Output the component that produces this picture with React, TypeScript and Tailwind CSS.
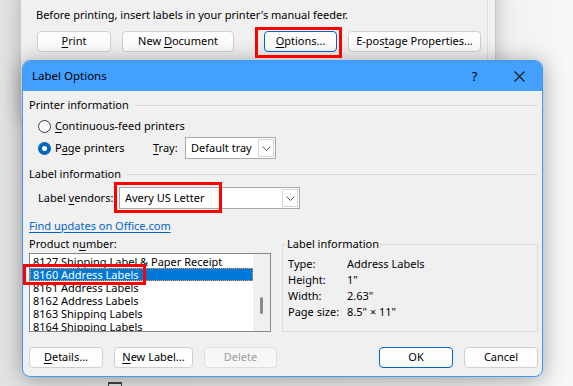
import React from 'react'

const font = "font-['Noto_Sans',sans-serif]"

function Btn({
  children,
  className = '',
  focused = false,
  disabled = false,
}: {
  children: React.ReactNode
  className?: string
  focused?: boolean
  disabled?: boolean
}) {
  const tone = disabled
    ? 'border-[#dedede] bg-[#f7f7f7] text-[#9d9d9d]'
    : focused
      ? 'border-[#0067c0] bg-[#fdfdfd] text-black'
      : 'border-[#d0d0d0] bg-[#fdfdfd] text-black'
  return (
    <div
      className={`flex h-[21px] items-center justify-center rounded-[4px] border text-[11px] ${tone} ${className}`}
    >
      <span>{children}</span>
    </div>
  )
}

function Chevron() {
  return (
    <svg width="9" height="5" viewBox="0 0 9 5">
      <path d="M0.5 0.5 L4.5 4.5 L8.5 0.5" fill="none" stroke="#5f5f5f" strokeWidth="1" />
    </svg>
  )
}

function Select({ value, className = '' }: { value: string; className?: string }) {
  return (
    <div className={`flex h-[22px] items-stretch border border-[#a9a9a9] bg-white ${className}`}>
      <div className="flex flex-1 items-center pl-[5px] text-[11px] text-black">{value}</div>
      <div className="m-px flex w-[16px] items-center justify-center border border-[#d6d6d6] bg-white">
        <Chevron />
      </div>
    </div>
  )
}

function Radio({ checked }: { checked?: boolean }) {
  return checked ? (
    <div className="flex h-[13px] w-[13px] items-center justify-center rounded-full bg-[#0067c0]">
      <div className="h-[5px] w-[5px] rounded-full bg-white" />
    </div>
  ) : (
    <div className="h-[13px] w-[13px] rounded-full border border-[#3a3a3a] bg-[#fafafa]" />
  )
}

function GroupHeader({ title }: { title: string }) {
  return (
    <div className="flex h-4 items-center gap-[6px]">
      <span>{title}</span>
      <div className="h-px flex-1 bg-[#dadada]" />
    </div>
  )
}

const products = [
  '8127 Shipping Label & Paper Receipt',
  '8160 Address Labels',
  '8161 Address Labels',
  '8162 Address Labels',
  '8163 Shipping Labels',
  '8164 Shipping Labels',
]

const details = [
  ['Type:', 'Address Labels'],
  ['Height:', '1"'],
  ['Width:', '2.63"'],
  ['Page size:', '8.5" × 11"'],
]

export default function App() {
  return (
    <div
      className={`relative h-[386px] w-[573px] overflow-hidden bg-[linear-gradient(90deg,#e3e3e3,#ececec_80%,#f8f8f8)] ${font} text-[11px] text-black`}
    >
      {/* Back window: Envelopes and Labels */}
      <div className="absolute left-[20px] top-[-10px] h-[130px] w-[476px] border border-[#c9c9c9] bg-[#f0f0f0] shadow-[0_0_18px_rgba(0,0,0,0.22)]">
        <div className="h-full w-[467px] border-r border-[#dedede] pl-[15px] pt-[16px]">
          <div className="h-4 leading-4">Before printing, insert labels in your printer's manual feeder.</div>
          <div className="mt-[8px] flex">
            <Btn className="ml-px w-[74px]">
              <u className="underline-offset-2">P</u>rint
            </Btn>
            <Btn className="ml-[11px] w-[112px]">
              New <u className="underline-offset-2">D</u>ocument
            </Btn>
            <Btn focused className="ml-[30px] w-[73px]">
              <u className="underline-offset-2">O</u>ptions...
            </Btn>
            <Btn className="ml-[11px] w-[133px]">
              E-pos<u className="underline-offset-2">t</u>age Properties...
            </Btn>
          </div>
        </div>
      </div>

      {/* Front dialog: Label Options */}
      <div className="absolute left-[22px] top-[60px] w-[521px] overflow-hidden rounded-[8px] border border-[#3d9afa] bg-[#f0f0f0] shadow-[0_2px_22px_rgba(0,0,0,0.35)]">
        <div className="flex h-[30px] items-center bg-[#44a0ff]">
          <span className="flex-1 pl-[9px] text-[11.5px]">Label Options</span>
          <span className="w-[45px] text-center text-[13px] leading-none">?</span>
          <div className="flex w-[45px] justify-center">
            <svg width="11" height="11" viewBox="0 0 11 11">
              <path d="M0.5 0.5 L10.5 10.5 M10.5 0.5 L0.5 10.5" stroke="#1a1a1a" strokeWidth="1.1" />
            </svg>
          </div>
        </div>

        <div className="flex flex-col pb-[8px] pl-[6px] pr-[4px] pt-[6px]">
          <GroupHeader title="Printer information" />

          <div className="mt-[5px] flex h-4 items-center pl-[9px]">
            <Radio />
            <span className="ml-[4px]">
              <u className="underline-offset-2">C</u>ontinuous-feed printers
            </span>
          </div>

          <div className="mt-[3px] flex h-[22px] items-center pl-[9px]">
            <div className="flex w-[115px] items-center">
              <Radio checked />
              <span className="ml-[4px]">
                P<u className="underline-offset-2">a</u>ge printers
              </span>
            </div>
            <span className="w-[32px]">
              <u className="underline-offset-2">T</u>ray:
            </span>
            <Select value="Default tray" className="w-[91px]" />
          </div>

          <div className="mt-[7px]">
            <GroupHeader title="Label information" />
          </div>

          <div className="mt-[5px] flex h-[22px] items-center pl-[9px]">
            <span className="w-[81px]">
              Label <u className="underline-offset-2">v</u>endors:
            </span>
            <Select value="Avery US Letter" className="w-[181px]" />
          </div>

          <div className="mt-[9px] h-4 leading-4 text-[#0066cc] underline underline-offset-2">
            Find updates on Office.com
          </div>

          <div className="mt-[2px] grid grid-cols-[242px_1fr] gap-[11px]">
            <div className="flex flex-col">
              <div className="h-4 leading-4">
                Product n<u className="underline-offset-2">u</u>mber:
              </div>
              <div className="mt-px flex h-[79px] border border-[#828790] bg-white">
                <div className="flex-1 overflow-hidden pt-px">
                  {products.map((p, i) => (
                    <div
                      key={p}
                      className={`h-[13px] overflow-hidden whitespace-nowrap pl-[3px] leading-[13px] ${
                        i === 1
                          ? 'bg-[#0078d7] text-white outline-1 -outline-offset-1 outline-dotted outline-[#ff9a3c]'
                          : 'text-black'
                      }`}
                    >
                      {p}
                    </div>
                  ))}
                </div>
                <div className="flex w-[17px] justify-center bg-[#f0f0f0] pt-[43px]">
                  <div className="h-[17px] w-[3px] rounded-full bg-[#8a8a8a]" />
                </div>
              </div>
            </div>

            <fieldset className="h-[96px] border border-[#dcdcdc] px-[3px]">
              <legend className="px-px leading-4">Label information</legend>
              <div className="mt-[4px] flex flex-col pl-[2px]">
                {details.map(([k, v]) => (
                  <div key={k} className="flex h-4 items-center">
                    <span className="w-[59px]">{k}</span>
                    <span>{v}</span>
                  </div>
                ))}
              </div>
            </fieldset>
          </div>

          <div className="mt-[15px] flex">
            <Btn className="w-[74px]">
              <u className="underline-offset-2">D</u>etails...
            </Btn>
            <Btn className="ml-[11px] w-[79px]">
              <u className="underline-offset-2">N</u>ew Label...
            </Btn>
            <Btn disabled className="ml-[11px] w-[73px]">
              Delete
            </Btn>
            <Btn focused className="ml-auto w-[74px]">
              OK
            </Btn>
            <Btn className="ml-[11px] w-[74px]">Cancel</Btn>
          </div>
        </div>
      </div>

      {/* red highlight boxes */}
      <div className="absolute left-[255px] top-[27px] h-[31px] w-[87px] border-[3px] border-[#ff0000]" />
      <div className="absolute left-[114px] top-[182px] h-[31px] w-[108px] border-[3px] border-[#ff0000]" />
      <div className="absolute left-[23px] top-[264px] h-[21px] w-[123px] border-[3px] border-[#ff0000]" />

      {/* glimpse of an icon below the dialog */}
      <div className="absolute left-[108px] top-[382px] h-[8px] w-[14px] border-x border-t-2 border-[#3a3a3a]" />
    </div>
  )
}
